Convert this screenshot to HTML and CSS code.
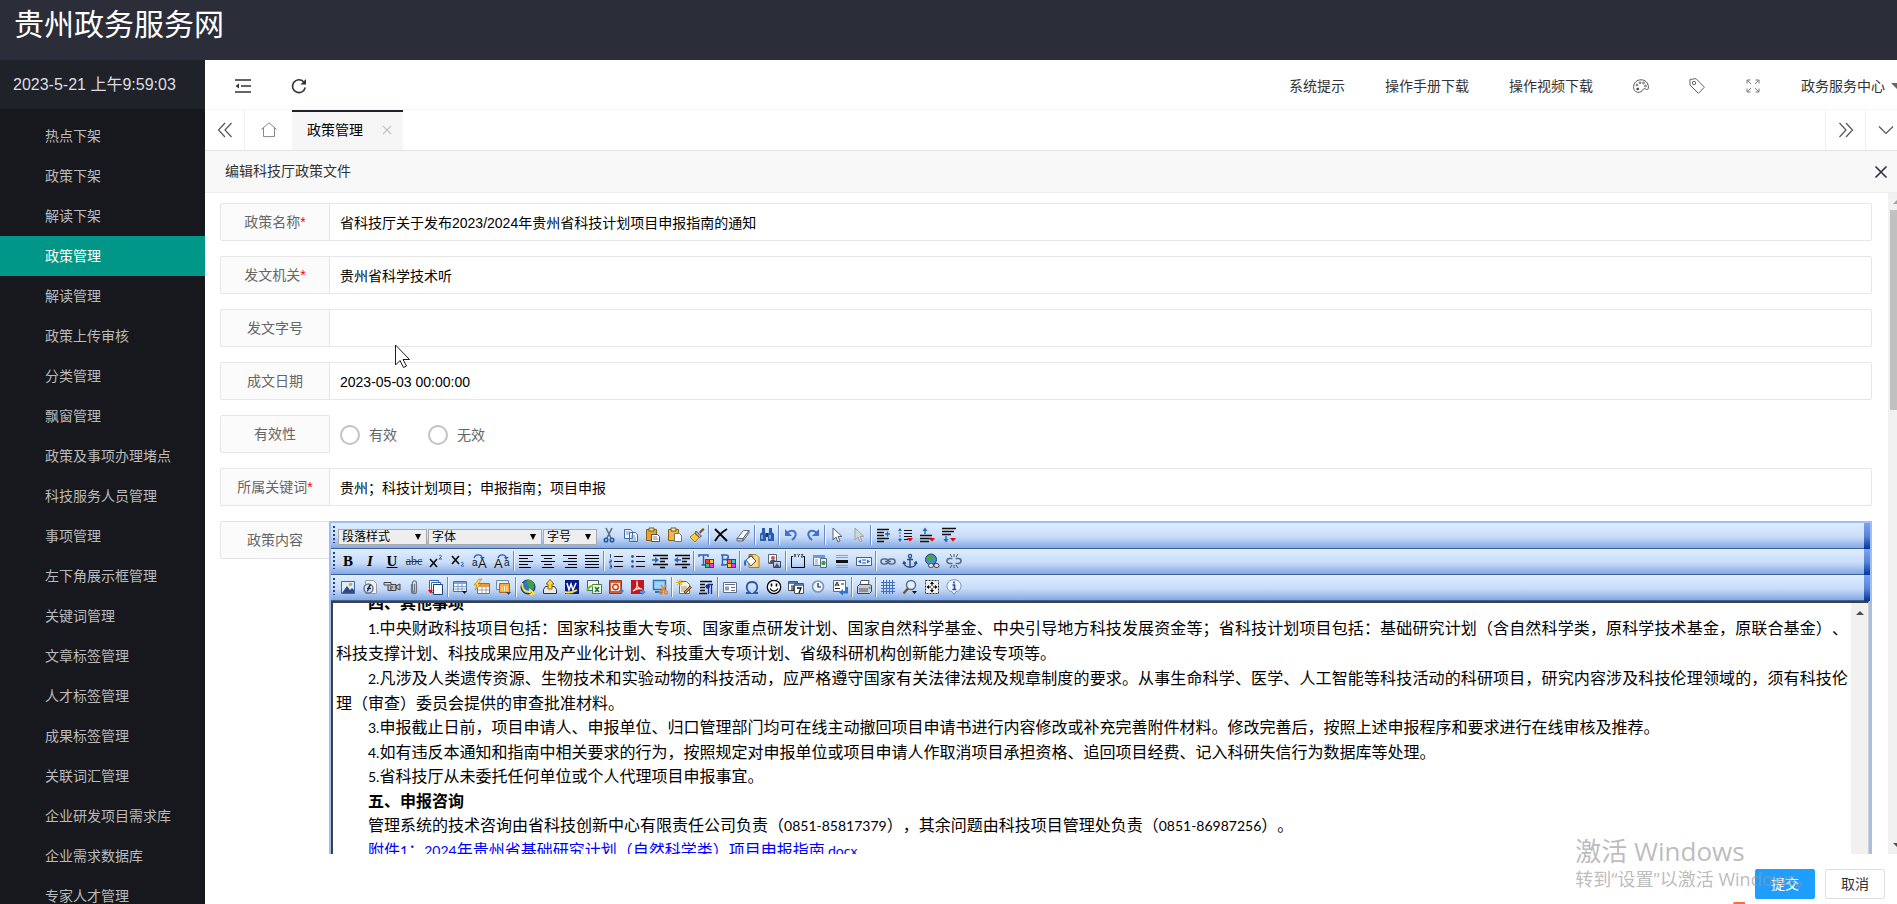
FILE: index.html
```html
<!DOCTYPE html>
<html lang="zh-CN">
<head>
<meta charset="utf-8">
<title>贵州政务服务网</title>
<link rel="stylesheet" href="styles.css">
</head>
<body>
<header class="brand"><h1>贵州政务服务网</h1></header>
<div class="shell">
  <aside class="side">
    <div class="clock">2023-5-21 上午9:59:03</div>
    <nav class="menu">
      <a href="#">热点下架</a>
      <a href="#">政策下架</a>
      <a href="#">解读下架</a>
      <a href="#" class="active">政策管理</a>
      <a href="#">解读管理</a>
      <a href="#">政策上传审核</a>
      <a href="#">分类管理</a>
      <a href="#">飘窗管理</a>
      <a href="#">政策及事项办理堵点</a>
      <a href="#">科技服务人员管理</a>
      <a href="#">事项管理</a>
      <a href="#">左下角展示框管理</a>
      <a href="#">关键词管理</a>
      <a href="#">文章标签管理</a>
      <a href="#">人才标签管理</a>
      <a href="#">成果标签管理</a>
      <a href="#">关联词汇管理</a>
      <a href="#">企业研发项目需求库</a>
      <a href="#">企业需求数据库</a>
      <a href="#">专家人才管理</a>
    </nav>
  </aside>
  <main class="main">
    <div class="topbar">
      <button class="top-item" aria-label="收起菜单"><svg viewBox="0 0 16 16"><path d="M0 2h16M6 8h10M0 14h16" fill="none" stroke="#333" stroke-width="1.5"/><path d="M0.5 8l3.5-2.4v4.8z" fill="#333"/></svg></button>
      <button class="top-item" aria-label="刷新"><svg viewBox="0 0 16 16"><path d="M14.2 9.5A6.4 6.4 0 1 1 12.6 3.8" fill="none" stroke="#333" stroke-width="1.6"/><path d="M15 1v5.6H9.4z" fill="#333"/></svg></button>
      <span class="spacer"></span>
      <a class="top-item" href="#">系统提示</a>
      <a class="top-item" href="#">操作手册下载</a>
      <a class="top-item" href="#">操作视频下载</a>
      <button class="top-item" aria-label="主题"><svg viewBox="0 0 16 16"><path d="M4.5 14.2C1 13.500 .5 10.500.6 8.500 .8 4.600 4 1.800 8 1.800c4.200 0 7.200 3 7.400 7 .1 2.400-.8 3.400-2 2.600-1.400-.9-3-1-3.600.2-.8 1.600-2.600 3.200-5.300 2.600z" fill="none" stroke="#555"/><g fill="none" stroke="#555" stroke-width=".9"><circle cx="4" cy="7" r=".9"/><circle cx="7" cy="4.700" r=".9"/><circle cx="10.500" cy="5" r=".9"/><circle cx="12.500" cy="8" r=".9"/></g><circle cx="4.700" cy="11" r="1.300" fill="#444"/></svg></button>
      <button class="top-item" aria-label="便签"><svg viewBox="0 0 16 16"><path d="M1 1.500L7 .6l8.400 8.600-6 6.200L1 7z" fill="none" stroke="#666" stroke-linejoin="round"/><circle cx="5" cy="5" r="1.700" fill="none" stroke="#666"/></svg></button>
      <button class="top-item" aria-label="全屏"><svg viewBox="0 0 16 16"><path d="M2 5.500V2h3.500M2.300 2.300L6 6M10.500 2H14v3.500M13.700 2.300L10 6M2 10.500V14h3.500M2.300 13.700L6 10M14 10.500V14h-3.500M13.700 13.700L10 10" fill="none" stroke="#777"/></svg></button>
      <a class="top-item user" href="#">政务服务中心<i class="caret"></i></a>
    </div>
    <div class="tabs">
      <button class="tab-ctl" aria-label="向左"><svg viewBox="0 0 16 16"><path d="M8 1L1.500 8 8 15M14.500 1L8 8l6.500 7" fill="none" stroke="#555" stroke-width="1.200"/></svg></button>
      <button class="tab-home" aria-label="主页"><svg viewBox="0 0 16 16"><path d="M.4 7.400L8 .8l7.600 6.600M2.500 6v8.600h11V6" fill="none" stroke="#888"/></svg></button>
      <div class="tab">政策管理<button class="tab-close" aria-label="关闭标签"><svg viewBox="0 0 16 16"><path d="M4 4l8 8M12 4l-8 8" stroke="#c4c4c4" stroke-width="1.200"/></svg></button></div>
      <span class="spacer"></span>
      <button class="tab-ctl right" aria-label="向右"><svg viewBox="0 0 16 16"><path d="M1.500 1L8 8l-6.500 7M8 1l6.500 7L8 15" fill="none" stroke="#555" stroke-width="1.200"/></svg></button>
      <button class="tab-ctl right" aria-label="标签操作"><svg viewBox="0 0 16 16"><path d="M1 4.500l7 7 7-7" fill="none" stroke="#555" stroke-width="1.200"/></svg></button>
    </div>
    <div class="dialog-title"><h2>编辑科技厅政策文件</h2><button class="dialog-close" aria-label="关闭"><svg viewBox="0 0 16 16"><path d="M2.500 2.500l11 11M13.500 2.500l-11 11" stroke="#2e2d3c" stroke-width="1.600"/></svg></button></div>

    <div class="body">
      <form class="form" id="policy">
        <div class="row"><label for="f1">政策名称<b>*</b></label><input class="field" id="f1" value="省科技厅关于发布2023/2024年贵州省科技计划项目申报指南的通知"></div>
        <div class="row"><label for="f2">发文机关<b>*</b></label><input class="field" id="f2" value="贵州省科学技术听"></div>
        <div class="row"><label for="f3">发文字号</label><input class="field" id="f3"></div>
        <div class="row"><label for="f4">成文日期</label><input class="field" id="f4" value="2023-05-03 00:00:00"></div>
        <div class="row"><span class="label">有效性</span><div class="radios"><label class="radio"><input type="radio" name="valid">有效</label><label class="radio"><input type="radio" name="valid">无效</label></div></div>
        <div class="row"><label for="f6">所属关键词<b>*</b></label><input class="field" id="f6" value="贵州；科技计划项目；申报指南；项目申报"></div>
        <div class="row tall"><span class="label">政策内容</span>
          <div class="editor">
            <div class="bar">
              <i class="grip"></i>
              <span class="pick style"><select aria-label="段落样式"><option>段落样式</option></select></span>
              <span class="pick font"><select aria-label="字体"><option>字体</option></select></span>
              <span class="pick size"><select aria-label="字号"><option>字号</option></select></span>
              <button type="button" aria-label="剪切"><svg viewBox="0 0 16 16"><path d="M5 1l5 10M11 1L6 11" stroke="#5b6f8c" stroke-width="1.600"/><g fill="none" stroke="#24589e" stroke-width="1.500"><circle cx="5" cy="13" r="1.800"/><circle cx="11" cy="13" r="1.800"/></g></svg></button>
              <button type="button" aria-label="复制"><svg viewBox="0 0 16 16"><path d="M1.500 2.500h6l2 2v7h-8zM6.500 5.500h6l2 2v7h-8z" fill="#f5f9ff" stroke="#3c69ad"/><path d="M3 5h4M3 7h3M8 9h4M8 11h5M8 13h5" stroke="#6f95cf"/></svg></button>
              <button type="button" aria-label="粘贴"><svg viewBox="0 0 16 16"><path d="M1.500 2.500h10v11h-10z" fill="#e3a330" stroke="#8d5d14"/><path d="M4 1h5v3H4z" fill="#ffe28a" stroke="#6b5b2c"/><path d="M6.500 7.500h6l2 2v5h-8z" fill="#fff" stroke="#555"/><path d="M8 10h4M8 12h5" stroke="#888"/></svg></button>
              <button type="button" aria-label="粘贴文本"><svg viewBox="0 0 16 16"><path d="M1.500 2.500h10v11h-10z" fill="#f0b843" stroke="#8d5d14"/><path d="M4 1h5v3H4z" fill="#fff2ae" stroke="#6b5b2c"/><path d="M7.500 6.500h5l2 2v6h-7z" fill="#fff" stroke="#777"/></svg></button>
              <button type="button" aria-label="格式刷"><svg viewBox="0 0 16 16"><path d="M10 5l4-4 1.500 1.500-4 4z" fill="#7d4b18"/><path d="M7 4l5.500 5-2 1.500L6 6z" fill="#a6adb8" stroke="#556"/><path d="M5.500 6.500l4.500 4-4 4.500-5-5z" fill="#ffcb3d" stroke="#b27a11"/></svg></button>
              <i class="sep"></i>
              <button type="button" aria-label="删除"><svg viewBox="0 0 16 16"><path d="M2 2l12 12M14 2C9 5 5 9 2 14" fill="none" stroke="#000" stroke-width="1.800"/></svg></button>
              <button type="button" aria-label="清除格式"><svg viewBox="0 0 16 16"><path d="M8.500 3.500h5.500l-6 8H2z" fill="#fff" stroke="#667"/><path d="M2 11.500h6v2.500H2zM8 14l6-8V3.500L8 11.500z" fill="#c9cbd6" stroke="#667"/></svg></button>
              <i class="sep"></i>
              <button type="button" aria-label="查找"><svg viewBox="0 0 16 16"><path d="M3 1h3v4H3zM10 1h3v4h-3zM1 7l2-2h3l1 2v7H1zM9 7l1-2h3l2 2v7H9z" fill="#2a5caf"/><path d="M7 6h2v4H7z" fill="#17376f"/><path d="M3 8v4M11 8v4" stroke="#d5e5ff"/></svg></button>
              <i class="sep"></i>
              <button type="button" aria-label="撤销"><svg viewBox="0 0 16 16"><path d="M4 6C8 2 14 4 12.500 8.500 12 10.500 10.500 12 9 13" fill="none" stroke="#3f73cf" stroke-width="2"/><path d="M2 2v7h7z" fill="#3f73cf"/></svg></button>
              <button type="button" aria-label="重做"><svg viewBox="0 0 16 16"><path d="M12 6C8 2 2 4 3.500 8.500 4 10.500 5.500 12 7 13" fill="none" stroke="#3f73cf" stroke-width="2"/><path d="M14 2v7H7z" fill="#3f73cf"/></svg></button>
              <i class="sep"></i>
              <button type="button" aria-label="全选"><svg viewBox="0 0 16 16"><path d="M4 1v12l3-3 2 5 2-1-2-4.500h4z" fill="#fff" stroke="#56607a"/></svg></button>
              <button type="button" aria-label="取消选择"><svg viewBox="0 0 16 16"><path d="M4 1v12l3-3 2 5 2-1-2-4.500h4z" fill="#d2d5da" stroke="#a3a3a3"/></svg></button>
              <i class="sep"></i>
              <button type="button" aria-label="首行缩进"><svg viewBox="0 0 16 16"><path d="M2 2.500h12M2 5.500h7M2 8.500h7M2 11.500h12M2 14.500h7" stroke="#111" stroke-width="1.300"/><path d="M10 7h5M12.500 4.500v5" stroke="#2563c4" stroke-width="1.400"/></svg></button>
              <button type="button" aria-label="行距"><svg viewBox="0 0 16 16"><path d="M3 2v12" stroke="#2563c4" stroke-dasharray="2 1"/><path d="M1 4l2-3 2 3zM1 12l2 3 2-3z" fill="#2563c4"/><path d="M7 3.500h8M7 6.500h8M7 9.500h8M7 12.500h4" stroke="#111" stroke-width="1.200"/><path d="M10 11h6l-3 3.500z" fill="#e8000b"/></svg></button>
              <button type="button" aria-label="段前距"><svg viewBox="0 0 16 16"><path d="M6 7V3" stroke="#2563c4" stroke-width="1.400"/><path d="M3.500 4L6 .5 8.500 4z" fill="#2563c4"/><path d="M1 8.500h12M1 11.500h12M1 14.500h9" stroke="#111" stroke-width="1.300"/><path d="M10 11h6l-3 3.500z" fill="#e8000b"/></svg></button>
              <button type="button" aria-label="段后距"><svg viewBox="0 0 16 16"><path d="M1 1.500h14M1 4.500h12M1 7.500h9" stroke="#111" stroke-width="1.300"/><path d="M5 9v4" stroke="#2563c4" stroke-width="1.400"/><path d="M2.500 12L5 15.500 7.500 12z" fill="#2563c4"/><path d="M9 11h6l-3 3.500z" fill="#e8000b"/></svg></button>
              <i class="cap"></i>
            </div>
            <div class="bar">
              <i class="grip"></i>
              <button type="button" class="txt bold" aria-label="粗体">B</button>
              <button type="button" class="txt ital" aria-label="斜体">I</button>
              <button type="button" class="txt under" aria-label="下划线">U</button>
              <button type="button" class="txt strike" aria-label="删除线">abc</button>
              <button type="button" aria-label="上标"><svg viewBox="0 0 16 16"><path d="M2 6l7 8M9 6l-7 8" stroke="#111" stroke-width="1.700"/><path d="M11 3c1-1.500 3-.5 2 1l-2 2h3" fill="none" stroke="#2563c4"/></svg></button>
              <button type="button" aria-label="下标"><svg viewBox="0 0 16 16"><path d="M2 3l7 8M9 3l-7 8" stroke="#111" stroke-width="1.700"/><path d="M11 10c1-1.500 3-.5 2 1l-2 2h3" fill="none" stroke="#2563c4"/></svg></button>
              <button type="button" aria-label="转大写"><svg viewBox="0 0 16 16"><text x="0" y="13" class="g9">a</text><text x="6" y="15" class="g13">A</text><path d="M2 5c1-4 7-4 8-1" fill="none" stroke="#2563c4" stroke-width="1.300"/><path d="M8 4h5l-3 3z" fill="#2563c4"/></svg></button>
              <button type="button" aria-label="转小写"><svg viewBox="0 0 16 16"><text x="0" y="15" class="g13">A</text><text x="10" y="13" class="g9">a</text><path d="M4 5c1-4 7-4 8-1" fill="none" stroke="#2563c4" stroke-width="1.300"/><path d="M10 4h5l-3 3z" fill="#2563c4"/></svg></button>
              <i class="sep"></i>
              <button type="button" aria-label="左对齐"><svg viewBox="0 0 16 16"><path d="M1 2.500h14M1 5.500h9M1 8.500h14M1 11.500h9M1 14.500h12" stroke="#000" stroke-width="1.200"/></svg></button>
              <button type="button" aria-label="居中"><svg viewBox="0 0 16 16"><path d="M1 2.500h14M4 5.500h8M1 8.500h14M4 11.500h8M2 14.500h12" stroke="#000" stroke-width="1.200"/></svg></button>
              <button type="button" aria-label="右对齐"><svg viewBox="0 0 16 16"><path d="M1 2.500h14M6 5.500h9M1 8.500h14M6 11.500h9M3 14.500h12" stroke="#000" stroke-width="1.200"/></svg></button>
              <button type="button" aria-label="两端对齐"><svg viewBox="0 0 16 16"><path d="M1 2.500h14M1 5.500h14M1 8.500h14M1 11.500h14M1 14.500h14" stroke="#000" stroke-width="1.200"/></svg></button>
              <i class="sep"></i>
              <button type="button" aria-label="编号"><svg viewBox="0 0 16 16"><path d="M6 3.500h9M6 8.500h9M6 13.500h9" stroke="#000" stroke-width="1.200"/><path d="M2.500 1v4M1.500 7h2v1.500h-2V10h2M1.500 12h2v3h-2M2 13.500h1.500" fill="none" stroke="#2b57a8"/></svg></button>
              <button type="button" aria-label="项目符号"><svg viewBox="0 0 16 16"><path d="M6 3.500h9M6 8.500h9M6 13.500h9" stroke="#000" stroke-width="1.200"/><g fill="#2b57a8"><circle cx="2.500" cy="3.500" r="1.400"/><circle cx="2.500" cy="8.500" r="1.400"/><circle cx="2.500" cy="13.500" r="1.400"/></g></svg></button>
              <button type="button" aria-label="增加缩进"><svg viewBox="0 0 16 16"><path d="M1 2.500h15M8 5.500h8M8 8.500h5M1 11.500h15M8 14.500h5" stroke="#000" stroke-width="1.300"/><path d="M0 7h4" stroke="#2563c4" stroke-width="1.500"/><path d="M3 4l4 3-4 3z" fill="#2563c4"/></svg></button>
              <button type="button" aria-label="减少缩进"><svg viewBox="0 0 16 16"><path d="M1 2.500h15M8 5.500h8M8 8.500h5M1 11.500h15M8 14.500h5" stroke="#000" stroke-width="1.300"/><path d="M3 7h4" stroke="#2563c4" stroke-width="1.500"/><path d="M4 4L0 7l4 3z" fill="#2563c4"/></svg></button>
              <i class="sep"></i>
              <button type="button" aria-label="字体颜色"><svg viewBox="0 0 16 16"><path d="M1 4V2h9v2M5.500 2v10M3.500 12h4" fill="none" stroke="#2f5fae" stroke-width="1.500"/><path d="M7 6h9v9H7z" fill="#444"/><path d="M8 7h3v3H8z" fill="#f33"/><path d="M12 7h3v3h-3z" fill="#fc3"/><path d="M8 11h3v3H8z" fill="#3c6"/><path d="M12 11h3v3h-3z" fill="#e3e"/></svg></button>
              <button type="button" aria-label="背景颜色"><svg viewBox="0 0 16 16"><path d="M2.500 2v10M1 2h5c3 0 3 4 0 4.500H3M6 6.500c3 .5 3 5.500-1 5.500H1" fill="none" stroke="#2f5fae" stroke-width="1.500"/><path d="M7 6h9v9H7z" fill="#444"/><path d="M8 7h3v3H8z" fill="#f63"/><path d="M12 7h3v3h-3z" fill="#3cc"/><path d="M8 11h3v3H8z" fill="#fc3"/><path d="M12 11h3v3h-3z" fill="#e3e"/></svg></button>
              <i class="sep"></i>
              <button type="button" aria-label="填充"><svg viewBox="0 0 16 16"><path d="M5 1.500h7l3 3v10H5z" fill="#ffd77a" stroke="#a67b2b"/><path d="M2 7l5-4 5 5-5 5z" fill="#fff" stroke="#456"/><path d="M1.500 7.500c-1 2-1 3 0 5" fill="none" stroke="#2563c4" stroke-width="2"/><path d="M5 5c0-4 4-4 4 0" fill="none" stroke="#456"/></svg></button>
              <button type="button" aria-label="背景图"><svg viewBox="0 0 16 16"><path d="M2.500 1.500h8v9h-8z" fill="#fff" stroke="#567"/><circle cx="7" cy="5" r="2" fill="#b55"/><path d="M3 10l2-3h4l2 3z" fill="#555"/><path d="M7.500 8.500h7v6h-7z" fill="#bcd3f5" stroke="#345"/><path d="M8 14l3-4 3 4z" fill="#557"/></svg></button>
              <i class="sep"></i>
              <button type="button" aria-label="绝对位置"><svg viewBox="0 0 16 16"><path d="M3 3.500H1.500v11h13v-11H13" fill="none" stroke="#000"/><path d="M4 1l2 3M6 1L4 4M7.500 1l1 1.500L10 1M8.500 2.500V4M11 1.500h2L11 4h2" stroke="#223" stroke-width=".8" fill="none"/></svg></button>
              <button type="button" aria-label="图层"><svg viewBox="0 0 16 16"><path d="M1.500 2.500h11v10h-11z" fill="#fff" stroke="#4a78bc"/><path d="M1 2h12v3H1z" fill="#6a98dc"/><path d="M3 7h3M3 9h3M3 11h3" stroke="#69c"/><path d="M8.500 5.500h6v9h-6z" fill="#eef" stroke="#567"/><circle cx="11.500" cy="10" r="2.200" fill="#3a9d4c"/></svg></button>
              <button type="button" aria-label="水平线"><svg viewBox="0 0 16 16"><path d="M2 2.500h12M2 4.500h12M2 12.500h12M2 14.500h12" stroke="#7fa1d6"/><path d="M2 7h12v3H2z" fill="#111"/></svg></button>
              <button type="button" aria-label="滚动字幕"><svg viewBox="0 0 16 16"><path d="M.5 4.500h15v8H.5z" fill="#e8f1ff" stroke="#4f5f7d"/><path d="M2 8.500l3-2v4zM14 8.500l-3-2v4z" fill="#2563c4"/><path d="M6 7h4M6 10h4" stroke="#2563c4"/></svg></button>
              <i class="sep"></i>
              <button type="button" aria-label="链接"><svg viewBox="0 0 16 16"><g fill="none" stroke="#5c6b86" stroke-width="1.600"><rect x="1" y="6" width="7" height="5" rx="2.500"/><rect x="8" y="6" width="7" height="5" rx="2.500"/><path d="M5 8.500h6"/></g></svg></button>
              <button type="button" aria-label="锚点"><svg viewBox="0 0 16 16"><circle cx="8" cy="3" r="1.600" fill="none" stroke="#284f8f" stroke-width="1.300"/><path d="M8 5v9M5 6.500h6M2 9c0 7 12 7 12 0M1 11l1-2 2 1.500M15 11l-1-2-2 1.500" fill="none" stroke="#284f8f" stroke-width="1.500"/></svg></button>
              <button type="button" aria-label="网页链接"><svg viewBox="0 0 16 16"><circle cx="7" cy="6.500" r="5.500" fill="#3f8fdf" stroke="#246"/><path d="M3 4c3-3 5 0 7-1 1 3-1 3-2 5-2 2-4-1-5-4z" fill="#47a837"/><g fill="#dde" stroke="#445"><rect x="4.500" y="10.500" width="5" height="4" rx="2"/><rect x="10" y="10.500" width="5" height="4" rx="2"/></g></svg></button>
              <button type="button" aria-label="取消链接"><svg viewBox="0 0 16 16"><path d="M6.500 5.500h-3a2.500 2.500 0 0 0 0 5h3M9.500 5.500h3a2.500 2.500 0 0 1 0 5h-3" fill="none" stroke="#5c6b86" stroke-width="1.700"/><path d="M8 1v3M4 1l2 3M12 1l-2 3M8 15v-3M4 15l2-3M12 15l-2-3" stroke="#456"/></svg></button>
              <i class="cap"></i>
            </div>
            <div class="bar">
              <i class="grip"></i>
              <button type="button" aria-label="图片"><svg viewBox="0 0 16 16"><path d="M1.500 2.500h13v12h-13z" fill="#dcecff" stroke="#3c69ad"/><circle cx="10.500" cy="5.500" r="1.700" fill="#f39a2c"/><path d="M2 14l5-7 3 4 2-2 2 2v3z" fill="#2c4d7d"/></svg></button>
              <button type="button" aria-label="动画"><svg viewBox="0 0 16 16"><path d="M3.500 1.500h8l3 3v10h-11z" fill="#f3f3f3" stroke="#99a"/><circle cx="6.500" cy="9.500" r="4.500" fill="#dce8f8" stroke="#667a99" stroke-width="1.500"/><path d="M9 6c-3 0-2 6-4 6M5 9.500h4" fill="none" stroke="#234" stroke-width="1.500"/></svg></button>
              <button type="button" aria-label="视频"><svg viewBox="0 0 16 16"><path d="M4 5.500h8v6H4zM12 7l4-2v6l-4-2z" fill="#b8bfca" stroke="#444"/><path d="M0 3.500h7v2.500H0z" fill="#ddd" stroke="#444"/><path d="M6 8h3M6 10h2" stroke="#333"/></svg></button>
              <button type="button" aria-label="附件"><svg viewBox="0 0 16 16"><path d="M5.500 5v7c0 3.500 5 3.500 5 0V4c0-3-4-3-4 0v8c0 1.500 2 1.500 2 0V5" fill="none" stroke="#6d7684" stroke-width="1.200"/></svg></button>
              <button type="button" aria-label="批量上传"><svg viewBox="0 0 16 16"><path d="M1.500 1.500h9v10h-9z" fill="#fff" stroke="#3562a8"/><path d="M3.500 3.500h9v10h-9z" fill="#fff" stroke="#3562a8"/><path d="M5.500 5.500h9v10h-9z" fill="#fff" stroke="#1d3f7c"/><path d="M0 11h5l-2.500 3.500z" fill="#e8000b"/></svg></button>
              <i class="sep"></i>
              <button type="button" aria-label="表格"><svg viewBox="0 0 16 16"><path d="M1.500 2.500h13v10h-13z" fill="#fff" stroke="#4a6fa5"/><path d="M2 3h12v2H2z" fill="#7ba4e0"/><path d="M2 7.500h12M2 10h12M6 5v7M10 5v7" stroke="#7d9bc8"/><path d="M10 12h5l-2.500 3z" fill="#111"/></svg></button>
              <button type="button" aria-label="插入表单"><svg viewBox="0 0 16 16"><path d="M3.500 4.500h12v10h-12z" fill="#fff" stroke="#a4692c"/><path d="M4 5h11v3H4z" fill="#e79a43"/><path d="M4 11h11M8 8v6M12 8v6" stroke="#a4a4a4"/><path d="M5 0L0 6h3l-2 5 6-6H4l4-5z" fill="#ffd848" stroke="#ae7412" stroke-width=".6"/></svg></button>
              <button type="button" aria-label="分栏"><svg viewBox="0 0 16 16"><path d="M.5 1.500h12v9H.5z" fill="#e3ecfa" stroke="#7187a9"/><path d="M3.500 4.500h10v9h-10z" fill="#ffa92d" stroke="#a4692c"/><path d="M6 7v5M8.500 7v5M11 7v5" stroke="#fff2cc"/><path d="M10 13h5l-2.500 3z" fill="#445"/></svg></button>
              <i class="sep"></i>
              <button type="button" aria-label="网页导入"><svg viewBox="0 0 16 16"><circle cx="8" cy="8" r="7" fill="#2f75c9" stroke="#124"/><path d="M7 1c5-1 8 3 7 7-2 3-4 2-5 0S6 3 7 1z" fill="#43a043"/><path d="M2 4c0 6 2 9 8 9v-2l4 3-4 2" fill="none" stroke="#ffe23b" stroke-width="2"/></svg></button>
              <button type="button" aria-label="导入"><svg viewBox="0 0 16 16"><path d="M1.500 10.500l2-3h9l2 3v4h-13z" fill="#e8e8e8" stroke="#333"/><path d="M6 10V5H4l4-4.500L12 5h-2v5z" fill="#ffd83b" stroke="#8a6a10"/></svg></button>
              <button type="button" aria-label="导入Word"><svg viewBox="0 0 16 16"><path d="M1 1h14v14H1z" fill="#0a1a8c"/><path d="M3 4l2 7 2-6 2 6 3-7" fill="none" stroke="#fff" stroke-width="1.500"/><path d="M1 13c3 1 7 1 12-2" fill="none" stroke="#ffe23b" stroke-width="2"/></svg></button>
              <button type="button" aria-label="导入Excel"><svg viewBox="0 0 16 16"><path d="M1.500 1.500h11v10h-11z" fill="#eef6e8" stroke="#557"/><path d="M6.500 5.500h9v9h-9z" fill="#fff" stroke="#3a8a35"/><path d="M9 8l4 5M13 8l-4 5" stroke="#23782c" stroke-width="1.700"/><path d="M1 12c2-4 3-5 6-5" fill="none" stroke="#6cc230" stroke-width="2"/></svg></button>
              <button type="button" aria-label="导入PPT"><svg viewBox="0 0 16 16"><path d="M1.500 1.500h12v13h-12z" fill="#d95a35" stroke="#963618"/><path d="M3 4h9v8H3z" fill="#fff1e5"/><circle cx="7.500" cy="8" r="2.800" fill="none" stroke="#c0401b" stroke-width="1.400"/><path d="M11 11h2V9l3 3-3 3v-2h-2z" fill="#3d7fdc"/></svg></button>
              <button type="button" aria-label="导入PDF"><svg viewBox="0 0 16 16"><path d="M1 1h13v14H1z" fill="#c5161c"/><path d="M3 12c4-2 5-6 4-9-1 4 2 7 5 7-4-1-6 0-9 2z" fill="none" stroke="#fff" stroke-width="1.200"/><path d="M10 12h2v-2l4 3-4 3v-2h-2z" fill="#4e8ee6"/></svg></button>
              <button type="button" aria-label="截图"><svg viewBox="0 0 16 16"><path d="M1.500 1.500h12v9h-12z" fill="#9fd4fa" stroke="#2a76bd" stroke-width="1.500"/><path d="M3 13h7" stroke="#2a76bd" stroke-width="2"/><path d="M9 6l4 6M14 6l-4 6" stroke="#e8862a" stroke-width="1.500"/><g fill="none" stroke="#e8862a" stroke-width="1.400"><circle cx="9" cy="13.500" r="1.500"/><circle cx="14" cy="13.500" r="1.500"/></g></svg></button>
              <i class="sep"></i>
              <button type="button" aria-label="一键排版"><svg viewBox="0 0 16 16"><path d="M3.500 2.500h7l3 3v9h-10z" fill="#fff6d8" stroke="#7d6d40"/><path d="M5 8h6M5 10h6M5 12h4" stroke="#999"/><path d="M4 0v7M0 3.500h7M1 1l5 5M6 1L1 6" stroke="#f5b400"/><path d="M8 13l6-6 1.500 1.500-6 6z" fill="#d8843b" stroke="#643"/></svg></button>
              <button type="button" aria-label="段落"><svg viewBox="0 0 16 16"><path d="M2 2.500h12M2 5.500h5M2 8.500h5M2 11.500h5M1 14.500h8" stroke="#111" stroke-width="1.400"/><path d="M10.500 5v10M13.500 5v10M15 5.500H10" stroke="#1c2c8c" stroke-width="1.300"/><circle cx="9.700" cy="7.500" r="2.200" fill="#1c2c8c"/></svg></button>
              <i class="sep"></i>
              <button type="button" aria-label="模板"><svg viewBox="0 0 16 16"><path d="M1.500 3.500h13v10h-13z" fill="#fff" stroke="#5e6f8d"/><path d="M3 5.500h10M9 8.500h4M9 11.500h4" stroke="#5e6f8d"/><path d="M3 7.500h4v4H3z" fill="#8a9bb8"/></svg></button>
              <button type="button" aria-label="特殊符号"><svg viewBox="0 0 16 16"><path d="M2 14h4c-5-4-4-11 2-11s7 7 2 11h4" fill="none" stroke="#2a58b0" stroke-width="1.800"/></svg></button>
              <button type="button" aria-label="表情"><svg viewBox="0 0 16 16"><circle cx="8" cy="8" r="6.700" fill="#fff" stroke="#000" stroke-width="1.300"/><path d="M5.500 4.500v3M10.500 4.500v3" stroke="#000" stroke-width="1.600"/><path d="M4 9.500c2 3.500 6 3.500 8 0" fill="none" stroke="#000" stroke-width="1.200"/></svg></button>
              <button type="button" aria-label="日期"><svg viewBox="0 0 16 16"><path d="M.5 2.500h9v9h-9z" fill="#fff" stroke="#456"/><path d="M1 3h8v2H1z" fill="#4d7cc8"/><path d="M3 7h3v4H3M3 9h3" fill="none" stroke="#111"/><path d="M6.500 4.500h9v10h-9z" fill="#fff" stroke="#456"/><path d="M7 5h8v2H7z" fill="#4d7cc8"/><path d="M9 9h4l-2 5" fill="none" stroke="#111" stroke-width="1.300"/></svg></button>
              <button type="button" aria-label="时间"><svg viewBox="0 0 16 16"><circle cx="8" cy="7.500" r="5.500" fill="#eef5ff" stroke="#7a93bd" stroke-width="1.600"/><path d="M8 4v4h3" fill="none" stroke="#223" stroke-width="1.200"/></svg></button>
              <button type="button" aria-label="文字替换"><svg viewBox="0 0 16 16"><path d="M1.500 1.500h12v11h-12z" fill="#fff" stroke="#5e6f8d"/><path d="M3 7l2-4 2 4M3.500 6h3M9 5h3M3 9.500h5" fill="none" stroke="#222"/><path d="M14 8v4h-3v-2l-4 3.500 4 3v-2h5V8z" fill="#2f73d8"/></svg></button>
              <i class="sep"></i>
              <button type="button" aria-label="打印"><svg viewBox="0 0 16 16"><path d="M5 1.500h8l-1 5H4z" fill="#fff" stroke="#556"/><path d="M1.500 7.500l2-2h10l2 1v6l-2 2h-12z" fill="#c9cdd6" stroke="#445"/><path d="M3 10h9M3 12h9" stroke="#556"/><circle cx="13.500" cy="9" r="1" fill="#3a3"/></svg></button>
              <i class="sep"></i>
              <button type="button" aria-label="网格"><svg viewBox="0 0 16 16"><path d="M3.500 1v14M6.500 1v14M9.500 1v14M12.500 1v14M1 3.500h14M1 6.500h14M1 9.500h14M1 12.500h14" stroke="#3e6fc4"/></svg></button>
              <button type="button" aria-label="缩放"><svg viewBox="0 0 16 16"><circle cx="9" cy="6" r="4.500" fill="#e3f0ff" stroke="#5c6b86" stroke-width="1.500"/><path d="M6 9.500L1.500 14.500" stroke="#7d4b18" stroke-width="2.200"/><path d="M10 12h5l-2.500 3z" fill="#111"/></svg></button>
              <button type="button" aria-label="全屏编辑"><svg viewBox="0 0 16 16"><path d="M1.500 1.500h13v13h-13z" fill="#eee" stroke="#333" stroke-dasharray="2 1"/><path d="M8 2.500L6 5h4zM8 13.500L6 11h4zM2.500 8L5 6v4zM13.500 8L11 6v4z" fill="#000"/><path d="M8 5v2M8 9v2M5 8h2M9 8h2" stroke="#000"/></svg></button>
              <button type="button" aria-label="关于"><svg viewBox="0 0 16 16"><path d="M8 .7c9 0 9 11.300 2 11.800L8 15.500l-2-3C-1 12-1 .7 8 .7z" fill="#f2f7ff" stroke="#7b8fb5"/><path d="M8 2.500v2M6.500 6H8.500v4.500M6.300 10.500h4" fill="none" stroke="#1f4fae" stroke-width="1.700"/></svg></button>
              <i class="cap"></i>
            </div>
            <div class="frame">
              <div class="doc">
                <p><strong>四、其他事项</strong></p>
                <p><span>1.</span>中央财政科技项目包括：国家科技重大专项、国家重点研发计划、国家自然科学基金、中央引导地方科技发展资金等；省科技计划项目包括：基础研究计划（含自然科学类，原科学技术基金，原联合基金）、科技支撑计划、科技成果应用及产业化计划、科技重大专项计划、省级科研机构创新能力建设专项等。</p>
                <p><span>2.</span>凡涉及人类遗传资源、生物技术和实验动物的科技活动，应严格遵守国家有关法律法规及规章制度的要求。从事生命科学、医学、人工智能等科技活动的科研项目，研究内容涉及科技伦理领域的，须有科技伦理（审查）委员会提供的审查批准材料。</p>
                <p class="short"><span>3.</span>申报截止日前，项目申请人、申报单位、归口管理部门均可在线主动撤回项目申请书进行内容修改或补充完善附件材料。修改完善后，按照上述申报程序和要求进行在线审核及推荐。</p>
                <p><span>4.</span>如有违反本通知和指南中相关要求的行为，按照规定对申报单位或项目申请人作取消项目承担资格、追回项目经费、记入科研失信行为数据库等处理。</p>
                <p class="short"><span>5.</span>省科技厅从未委托任何单位或个人代理项目申报事宜。</p>
                <p><strong>五、申报咨询</strong></p>
                <p class="short">管理系统的技术咨询由省科技创新中心有限责任公司负责（<span>0851-85817379</span>），其余问题由科技项目管理处负责（<span>0851-86987256</span>）。</p>
                <p><a href="#">附件<span>1</span>：<span>2024</span>年贵州省基础研究计划（自然科学类）项目申报指南<span>.docx</span></a></p>
              </div>
              <div class="scroll inner"><i class="up"></i></div>
            </div>
          </div>
        </div>
      </form>
      <div class="scroll outer"><i class="up"></i><i class="thumb"></i><i class="down"></i></div>
    </div>
    <div class="foot">
      <button type="submit" form="policy" class="btn primary">提交</button>
      <button type="button" class="btn">取消</button>
    </div>
  </main>
</div>
<div class="watermark"><div class="w1">激活 Windows</div><div class="w2">转到“设置”以激活 Windows。</div></div>
<svg class="pointer" viewBox="0 0 16 25"><path d="M.5 1v20l4.500-4.500 3.500 7 3-1.500-3.500-6.500h6.500z" fill="#fff" stroke="#1b1b2b"/></svg>
<i class="ime"></i>
</body>
</html>
```
FILE: styles.css
```css
* { box-sizing: border-box; }
body {
  margin: 0;
  height: 100vh;
  overflow: hidden;
  display: flex;
  flex-direction: column;
  font: 14px/20px "Liberation Sans", "Noto Sans CJK SC", sans-serif;
  color: #333;
  background: #fff;
}
button {
  border: 0;
  padding: 0;
  background: none;
  font: inherit;
  color: inherit;
}
button svg { display: block; width: 16px; height: 16px; overflow: visible; }
a { color: inherit; text-decoration: none; }
h1, h2, p { margin: 0; font-weight: 400; }
.spacer { flex: 1; }

.brand {
  flex: none;
  height: 60px;
  padding: 3px 14px;
  background: #2b2d38;
  color: #fff;
}
.brand h1 { font-size: 30px; line-height: 44px; }
.shell { flex: 1; min-height: 0; display: flex; }

.side {
  flex: none;
  width: 205px;
  overflow: hidden;
  background: #17181d;
}
.clock {
  height: 49px;
  padding-left: 13px;
  background: #20222a;
  color: #dcdde0;
  font-size: 16px;
  line-height: 49px;
}
.menu { padding-top: 7px; }
.menu a {
  display: block;
  padding-left: 45px;
  line-height: 40px;
  color: #b9babb;
}
.menu .active { background: #009688; color: #fff; }

.main {
  flex: 1;
  min-width: 0;
  margin-right: -8px;
  display: flex;
  flex-direction: column;
}
.topbar {
  flex: none;
  display: flex;
  align-items: center;
  height: 50px;
  padding: 2px 0 0 10px;
  border-bottom: 1px solid #f6f6f6;
}
.top-item {
  display: flex;
  align-items: center;
  gap: 6px;
  padding: 0 20px;
}
.user { padding-right: 2px; }
.caret {
  border: 6px solid transparent;
  border-top-color: #666;
  border-bottom: 0;
}

.tabs {
  flex: none;
  display: flex;
  height: 41px;
  border-bottom: 1px solid #e2e2e2;
}
.tab-ctl, .tab-home { display: flex; align-items: center; justify-content: center; }
.tab-ctl { width: 40px; border-right: 1px solid #f0f0f0; }
.tab-ctl.right { border-right: 0; border-left: 1px solid #f0f0f0; }
.tab-home { width: 47px; }
.tab {
  display: flex;
  align-items: center;
  gap: 16px;
  padding: 0 8px 2px 15px;
  border-top: 2px solid #20222a;
  background: #f6f6f6;
  color: #000;
}

.dialog-title {
  flex: none;
  display: flex;
  align-items: center;
  justify-content: space-between;
  height: 42px;
  padding: 0 16px 2px 20px;
  border-bottom: 1px solid #eee;
  background: #f8f8f8;
}
.dialog-title h2 { font-size: 14px; line-height: 20px; }
.dialog-close { padding-top: 2px; }

.body { flex: 1; min-height: 0; display: flex; overflow: hidden; }
.form {
  flex: 1;
  min-width: 0;
  display: flex;
  flex-direction: column;
  gap: 15px;
  padding: 10px 16px 10px 15px;
}
.row { flex: none; display: flex; height: 38px; }
.row > label, .label {
  flex: none;
  width: 110px;
  height: 38px;
  padding: 8px 4px;
  border: 1px solid #e6e6e6;
  border-radius: 2px 0 0 2px;
  background: #fbfbfb;
  color: #666;
  text-align: center;
}
.row b { color: #f00; font-weight: 400; }
.field {
  flex: 1;
  min-width: 0;
  margin-left: -1px;
  padding: 2px 10px 0;
  border: 1px solid #e6e6e6;
  border-radius: 0 2px 2px 0;
  background: #fff;
  color: #000;
  font: inherit;
}
.radios { display: flex; align-items: center; gap: 25px; padding: 2px 0 0 10px; }
.radio { display: flex; align-items: center; gap: 9px; width: 63px; color: #666; white-space: nowrap; }
.radio input {
  flex: none;
  appearance: none;
  width: 20px;
  height: 20px;
  margin: 0;
  border: 2px solid #c2c2c2;
  border-radius: 50%;
}

.row.tall { height: 480px; }
.editor {
  flex: 1;
  min-width: 0;
  display: flex;
  flex-direction: column;
  margin-left: -1px;
  border: 2px solid #9ebef5;
  background: #9ebef5;
}
.bar {
  flex: none;
  display: flex;
  align-items: center;
  height: 26px;
  padding-bottom: 2px;
  border-bottom: 1px solid #3b619c;
  background: linear-gradient(#dfeeff, #c8dcf9 55%, #84a9e4);
}
.bar button {
  flex: none;
  width: 22px;
  height: 22px;
  display: flex;
  align-items: center;
  justify-content: center;
}
.grip {
  flex: none;
  width: 2px;
  height: 17px;
  margin: 0 2px;
  background: repeating-linear-gradient(#27418b 0 2px, transparent 2px 4px);
}
.sep { flex: none; width: 2px; height: 20px; border-left: 1px solid #6a8ccb; border-right: 1px solid #f1f9ff; }
.cap { flex: none; align-self: flex-start; width: 6px; height: 26px; margin-left: auto; background: linear-gradient(#76a4f0, #5a85d8 50%, #00369a); }
.pick { position: relative; height: 16px; margin-top: 4px; margin-right: 1px; }
.pick select {
  display: block;
  width: 100%;
  height: 16px;
  padding: 0 3px;
  appearance: none;
  border: 1px solid #aaa;
  border-radius: 0;
  background: #eee;
  color: #000;
  font: 12px/14px "Liberation Sans", "Noto Sans CJK SC", sans-serif;
}
.pick::after {
  content: "";
  position: absolute;
  right: 6px;
  top: 5px;
  border: 3px solid transparent;
  border-top: 6px solid #000;
  border-bottom: 0;
}
.pick.style { width: 89px; margin-left: 1px; }
.pick.font { width: 114px; }
.pick.size { width: 54px; }
.bar .txt { color: #000; font: 15px/16px "Liberation Serif", serif; }
.bar .bold { font-weight: 700; }
.bar .ital { font-weight: 700; font-style: italic; }
.bar .under { font-weight: 700; text-decoration: underline; }
.bar .strike { font-size: 12px; text-decoration: line-through; color: #333; }
.g9 { font: 10px "Liberation Sans", sans-serif; fill: #111; }
.g13 { font: 13px "Liberation Sans", sans-serif; fill: #111; }

.frame {
  flex: 1;
  min-height: 0;
  display: flex;
  overflow: hidden;
  border: 2px solid #404040;
  border-right: 1px solid #d4d0c8;
  margin-right: 1px;
  background: #fff;
}
.doc {
  flex: 1;
  min-width: 0;
  margin-top: -12px;
  padding: 0 3px;
  color: #000;
  font: 16px/25px "Liberation Sans", "Noto Sans CJK SC", sans-serif;
  text-align: justify;
  text-spacing-trim: space-all;
}
.doc p { text-indent: 32px; }
.doc .short { line-height: 24px; }
.doc span { font-family: Lato, sans-serif; font-size: 14px; }
.doc a { color: #00f; }

.scroll { flex: none; display: flex; flex-direction: column; align-items: center; width: 17px; background: #f1f1f1; }
.scroll i { flex: none; }
.up { margin-top: 8px; border: 4px solid transparent; border-bottom-color: #505050; border-top: 0; }
.outer .up { margin: 7px 0 6px; border-bottom-color: #a3a3a3; }
.down { margin: auto 0 7px; border: 4px solid transparent; border-top-color: #505050; border-bottom: 0; }
.thumb { width: 13px; height: 200px; background: #c1c1c1; }

.foot {
  flex: none;
  display: flex;
  justify-content: flex-end;
  gap: 10px;
  height: 50px;
  padding: 15px 20px 5px;
}
.btn { width: 60px; height: 30px; border: 1px solid #dedede; border-radius: 2px; background: #fff; }
.btn.primary { border-color: #1e9fff; background: #1e9fff; color: #fff; }

.watermark {
  position: absolute;
  right: 84px;
  bottom: 13px;
  color: rgba(150, 150, 150, .65);
  font-family: "Open Sans", "Noto Sans CJK SC", sans-serif;
  white-space: nowrap;
  pointer-events: none;
}
.w1 { font-size: 26px; line-height: 32px; }
.w2 { font-size: 18px; line-height: 24px; }
.pointer { position: absolute; left: 395px; top: 344px; width: 16px; height: 25px; }
.ime { position: absolute; left: 1733px; bottom: 0; width: 12px; height: 2px; border-radius: 6px 2px 0 0; background: #ff6a3d; }
```
